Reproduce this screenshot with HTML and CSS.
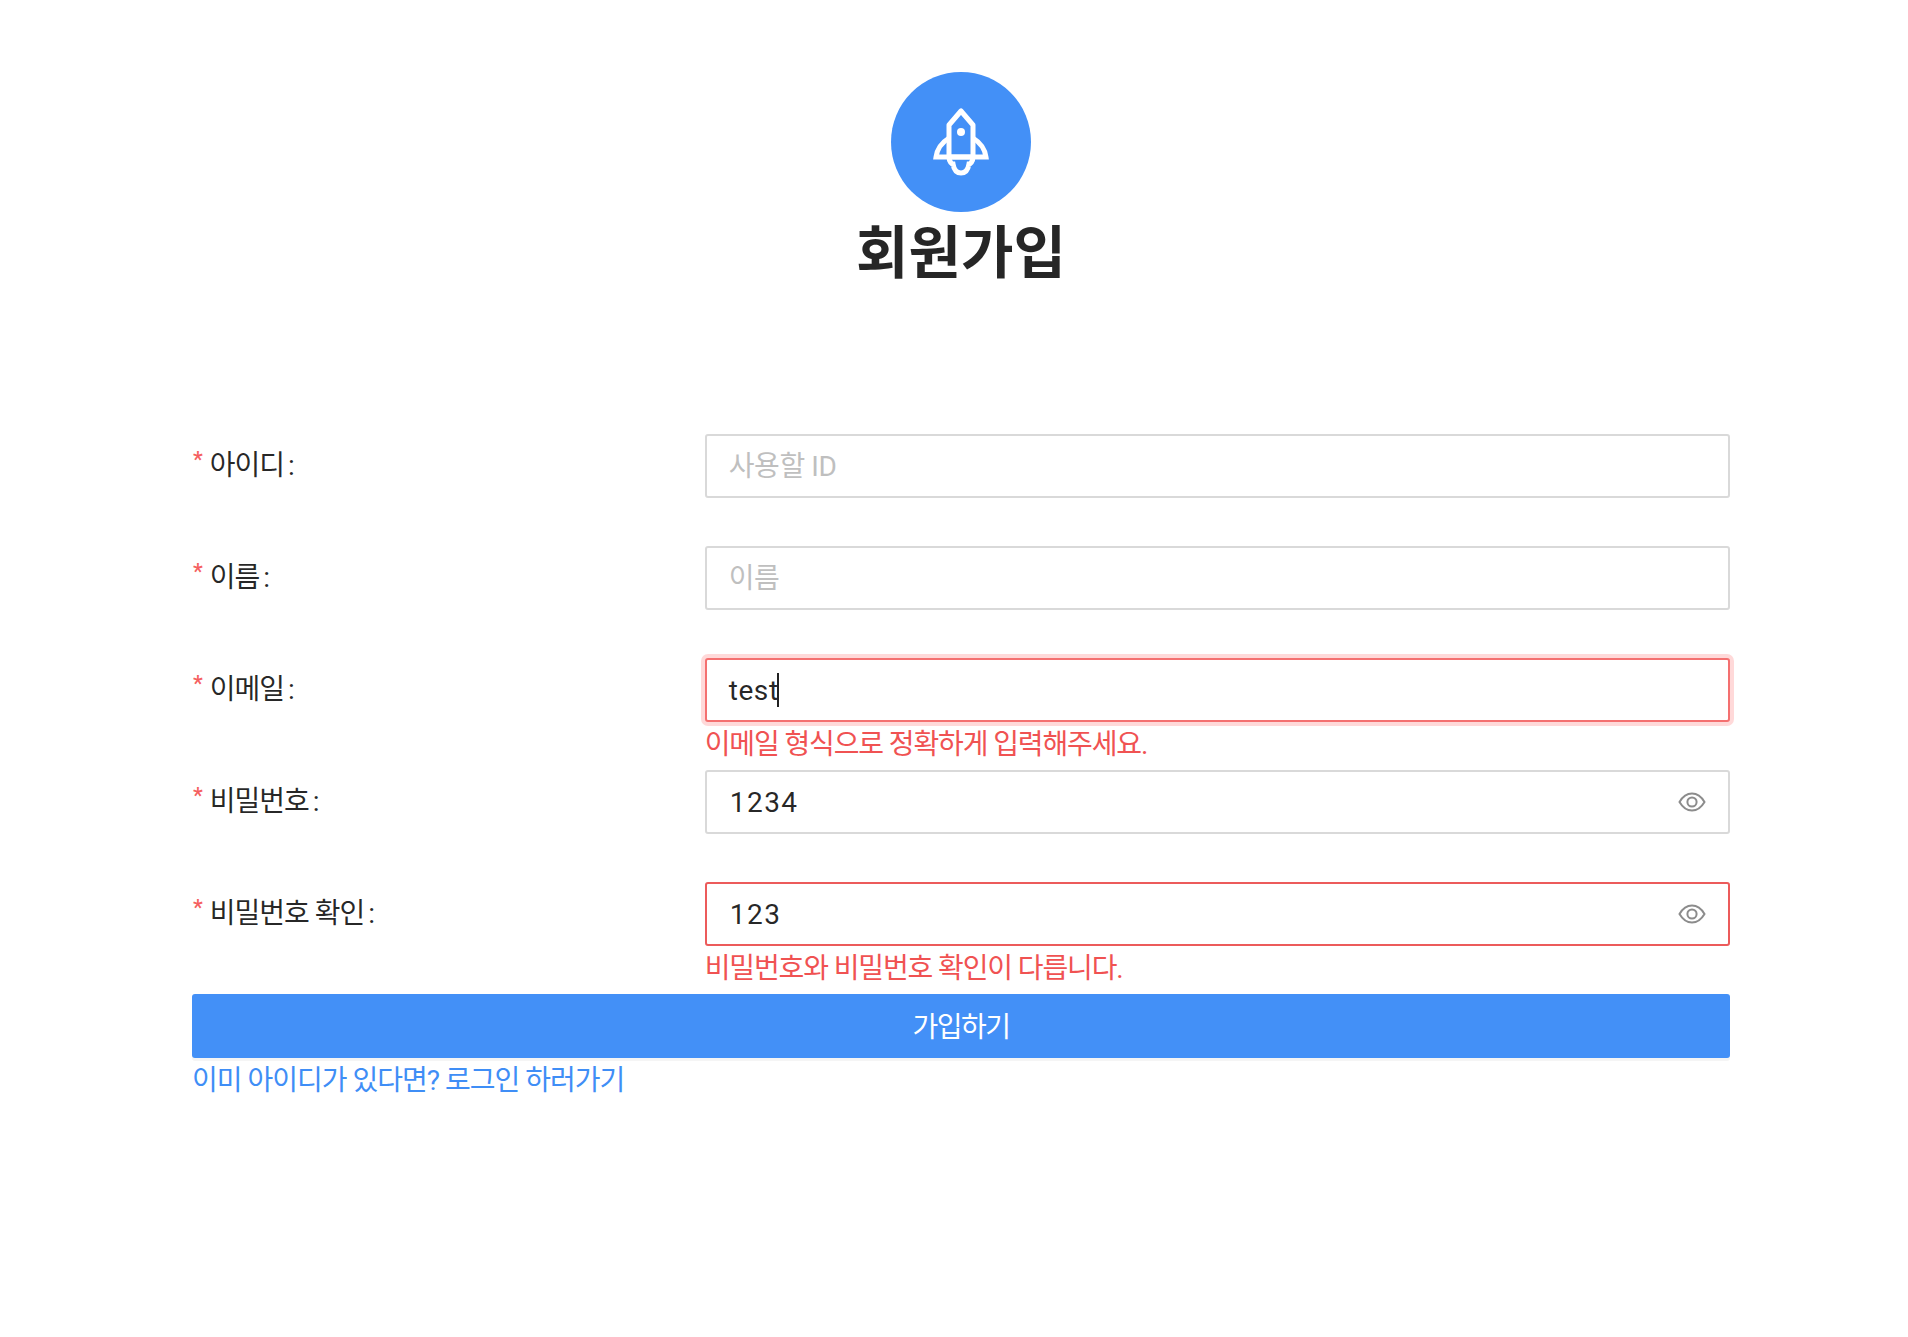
FILE: index.html
```html
<!DOCTYPE html>
<html lang="ko">
<head>
<meta charset="utf-8">
<title>회원가입</title>
<link rel="stylesheet" href="styles.css">
</head>
<body>
<main class="page">
  <header class="head">
    <div class="avatar">
      <svg class="rocket" viewBox="0 0 56 68" fill="none" stroke="#fff" stroke-width="5">
        <path d="M28 3 L16 17 V49 H40 V17 Z" stroke-linejoin="round"/>
        <circle cx="28" cy="24" r="4" fill="#fff" stroke="none"/>
        <path d="M16 30 C8 35 4 42 3 49 H53 C52 42 48 35 40 30"/>
        <path d="M16 49 C16 54 19 56 20 56 C21 62 24 65 28 65 C32 65 35 62 36 56 C37 56 40 54 40 49"/>
      </svg>
    </div>
    <h1 class="title">회원가입</h1>
  </header>
  <form class="form">
    <div class="row">
      <label class="label"><span class="req">*</span>아이디<span class="colon">:</span></label>
      <div class="control"><div class="field"><span class="ph">사용할 ID</span></div></div>
    </div>
    <div class="row">
      <label class="label"><span class="req">*</span>이름<span class="colon">:</span></label>
      <div class="control"><div class="field"><span class="ph">이름</span></div></div>
    </div>
    <div class="row">
      <label class="label"><span class="req">*</span>이메일<span class="colon">:</span></label>
      <div class="control">
        <div class="field field-focus"><span class="val val-text">test</span><span class="caret"></span></div>
        <div class="err">이메일 형식으로 정확하게 입력해주세요.</div>
      </div>
    </div>
    <div class="row">
      <label class="label"><span class="req">*</span>비밀번호<span class="colon">:</span></label>
      <div class="control">
        <div class="field"><span class="val val-pw">1234</span>
          <svg class="eye" viewBox="0 0 28 20" fill="none" stroke="#8c8c8c" stroke-width="2"><path d="M1.5 10 C5 4 9 1.5 14 1.5 C19 1.5 23 4 26.5 10 C23 16 19 18.5 14 18.5 C9 18.5 5 16 1.5 10 Z"/><circle cx="14" cy="10" r="4.6"/></svg>
        </div>
      </div>
    </div>
    <div class="row">
      <label class="label"><span class="req">*</span>비밀번호 확인<span class="colon">:</span></label>
      <div class="control">
        <div class="field field-err"><span class="val val-pw">123</span>
          <svg class="eye" viewBox="0 0 28 20" fill="none" stroke="#8c8c8c" stroke-width="2"><path d="M1.5 10 C5 4 9 1.5 14 1.5 C19 1.5 23 4 26.5 10 C23 16 19 18.5 14 18.5 C9 18.5 5 16 1.5 10 Z"/><circle cx="14" cy="10" r="4.6"/></svg>
        </div>
        <div class="err">비밀번호와 비밀번호 확인이 다릅니다.</div>
      </div>
    </div>
    <button class="submit" type="button">가입하기</button>
    <a class="link" href="#">이미 아이디가 있다면? 로그인 하러가기</a>
  </form>
</main>
</body>
</html>
```
FILE: styles.css
```css
* { box-sizing: border-box; }
html, body { margin: 0; background: #fff; }
body {
  font-family: Roboto, "Noto Sans CJK KR", sans-serif;
  color: rgba(0,0,0,.85);
  font-size: 28px;
}
.page { width: 1908px; height: 1337px; padding: 72px 178px 0 192px; }
.head { display: flex; flex-direction: column; align-items: center; height: 362px; }
.avatar {
  width: 140px; height: 140px; border-radius: 50%;
  background: #4390f7;
  display: flex; align-items: center; justify-content: center;
}
.rocket { width: 56px; height: 68px; }
.title {
  margin: 2px 0 0; font-size: 57px; line-height: 80px; font-weight: 700;
  color: rgba(0,0,0,.85);
}
.form { display: flex; flex-direction: column; }
.row { display: grid; grid-template-columns: 1fr 2fr; height: 112px; }
.label { line-height: 64px; display: block; letter-spacing: -1px; }
.req {
  color: #f56060; margin-right: 8px; margin-left: 1px; font-size: 22px;
  font-weight: 500; line-height: 0; vertical-align: 8px;
}
.colon { margin-left: 4px; }
.control { display: flex; flex-direction: column; }
.field {
  height: 64px; border: 2px solid #d9d9d9; border-radius: 3px;
  padding: 0 22px; display: flex; align-items: center; flex: none;
  background: #fff;
}
.field-focus { border-color: #f47070; box-shadow: 0 0 0 4px #ffd9d9; }
.field-err { border-color: #ec5b5b; }
.ph { color: #bfbfbf; line-height: 1; letter-spacing: -.4px; padding-top: 2px; }
.val { color: rgba(0,0,0,.85); }
.val-text { letter-spacing: .6px; }
.val-pw { flex: 1; letter-spacing: 1.5px; padding-left: 1px; }
.caret { width: 2px; height: 34px; background: #222; margin-left: -2px; }
.eye { width: 28px; height: 20px; flex: none; }
.err { color: #f05252; line-height: 46px; height: 48px; white-space: nowrap; letter-spacing: -1.12px; }
.submit {
  height: 64px; border: 0; border-radius: 3px; background: #4390f7; color: #fff;
  font: inherit; box-shadow: 0 3px 0 rgba(0,0,0,.04); padding: 0 0 2px; letter-spacing: -1.5px;
}
.link { color: #3f8ef6; text-decoration: none; line-height: 46px; letter-spacing: -1px; }
```
